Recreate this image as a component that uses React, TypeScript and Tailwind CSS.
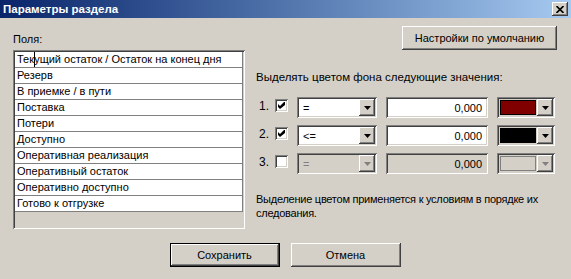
import React from "react";

const raised =
  "shadow-[inset_-1px_-1px_#404040,inset_1px_1px_#ffffff,inset_-2px_-2px_#808080,inset_2px_2px_#d4d0c8]";
const sunken =
  "shadow-[inset_1px_1px_#808080,inset_-1px_-1px_#ffffff,inset_2px_2px_#404040,inset_-2px_-2px_#d4d0c8]";

const fields = [
  "Текущий остаток / Остаток на конец дня",
  "Резерв",
  "В приемке / в пути",
  "Поставка",
  "Потери",
  "Доступно",
  "Оперативная реализация",
  "Оперативный остаток",
  "Оперативно доступно",
  "Готово к отгрузке",
];

const rules = [
  { n: "1.", checked: true, op: "=", value: "0,000", color: "bg-[#800000]", enabled: true },
  { n: "2.", checked: true, op: "<=", value: "0,000", color: "bg-black", enabled: true },
  { n: "3.", checked: false, op: "=", value: "0,000", color: "bg-[#d4d0c8]", enabled: false },
];

const Arrow = ({ enabled }: { enabled: boolean }) => (
  <div className={`w-[16px] h-[17px] bg-[#d4d0c8] flex items-center justify-center ${raised}`}>
    <svg width="7" height="4" viewBox="0 0 7 4">
      <path d="M0 0h7L3.5 4z" fill={enabled ? "#000000" : "#808080"} />
    </svg>
  </div>
);

const Checkbox = ({ checked }: { checked: boolean }) => (
  <div className={`relative w-[13px] h-[13px] bg-white mt-[2px] ${sunken}`}>
    {checked && (
      <svg className="absolute left-[3px] top-[3px]" width="7" height="7" viewBox="0 0 7 7">
        <polygon points="0,2 2,4 6,0 7,0 7,3 2,7 0,5" fill="#000000" />
      </svg>
    )}
  </div>
);

const App = () => {
  return (
    <div className="w-[571px] h-[279px] bg-[#d4d0c8] flex flex-col font-['Liberation_Sans',Arial,sans-serif] text-[11px] leading-[14px] text-black overflow-hidden">
      {/* Title bar */}
      <div className="h-[18px] bg-gradient-to-r from-[#0a246a] to-[#a6caf0] flex items-center pl-[3px] pr-[3px]">
        <span className="text-white font-bold text-[11.5px]">Параметры раздела</span>
        <div className={`ml-auto w-[16px] h-[14px] bg-[#d4d0c8] flex items-center justify-center ${raised}`}>
          <svg width="8" height="7" viewBox="0 0 8 7">
            <path d="M0.5 0 L7.5 7 M7.5 0 L0.5 7" stroke="#000000" strokeWidth="1.6" />
          </svg>
        </div>
      </div>

      <div className="flex flex-col pl-[13px] pr-[14px]">
        {/* Header row */}
        <div className="flex items-center justify-between pt-[8px]">
          <span className="mt-[1px]">Поля:</span>
          <button className={`w-[155px] h-[24px] bg-[#d4d0c8] ${raised}`}>Настройки по умолчанию</button>
        </div>

        {/* Main content */}
        <div className="flex">
          <div className={`w-[232px] h-[179px] bg-[#d4d0c8] p-[2px] flex flex-col ${sunken}`}>
            {fields.map((f, i) => (
              <div
                key={f}
                className="relative h-[16px] bg-white border-b border-r border-[#808080] pl-[2px] whitespace-nowrap leading-[15px]"
              >
                {f}
                {i === 0 && <span className="absolute left-[19px] top-0 w-[1px] h-[15px] bg-black" />}
              </div>
            ))}
          </div>

          <div className="flex flex-col ml-[11px] flex-1">
            <div className="mt-[20px] whitespace-nowrap text-[11.5px]">Выделять цветом фона следующие значения:</div>
            <div className="flex flex-col gap-[7px] mt-[13px]">
              {rules.map((r) => (
                <div key={r.n} className="flex items-start h-[21px]">
                  <span className="w-[19px] pl-[3px] mt-[2px] text-[12px]">{r.n}</span>
                  <Checkbox checked={r.checked} />
                  <div
                    className={`ml-[9px] w-[80px] h-[21px] p-[2px] flex items-center ${sunken} ${r.enabled ? "bg-white" : "bg-[#d4d0c8]"}`}
                  >
                    <span className={`pl-[4px] ${r.enabled ? "text-black" : "text-[#808080]"}`}>{r.op}</span>
                    <div className="ml-auto">
                      <Arrow enabled={r.enabled} />
                    </div>
                  </div>
                  <div
                    className={`ml-[9px] w-[102px] h-[21px] pr-[6px] flex items-center justify-end ${sunken} ${r.enabled ? "bg-white" : "bg-[#d4d0c8]"}`}
                  >
                    {r.value}
                  </div>
                  <div className={`ml-[9px] w-[58px] h-[21px] p-[2px] flex items-center bg-[#d4d0c8] ${sunken}`}>
                    <div
                      className={`ml-[1px] w-[36px] h-[15px] border ${r.enabled ? "border-black" : "border-[#808080]"} ${r.color}`}
                    />
                    <div className="ml-auto">
                      <Arrow enabled={r.enabled} />
                    </div>
                  </div>
                </div>
              ))}
            </div>
            <div className="mt-[18px] whitespace-nowrap tracking-[-0.25px]">
              Выделение цветом применяется к условиям в порядке их
              <br />
              следования.
            </div>
          </div>
        </div>

        {/* Buttons */}
        <div className="flex justify-center gap-[11px] mt-[14px]">
          <button className={`w-[110px] h-[24px] bg-[#d4d0c8] border border-black ${raised}`}>Сохранить</button>
          <button className={`w-[110px] h-[24px] bg-[#d4d0c8] ${raised}`}>Отмена</button>
        </div>
      </div>
    </div>
  );
};

export default App;
